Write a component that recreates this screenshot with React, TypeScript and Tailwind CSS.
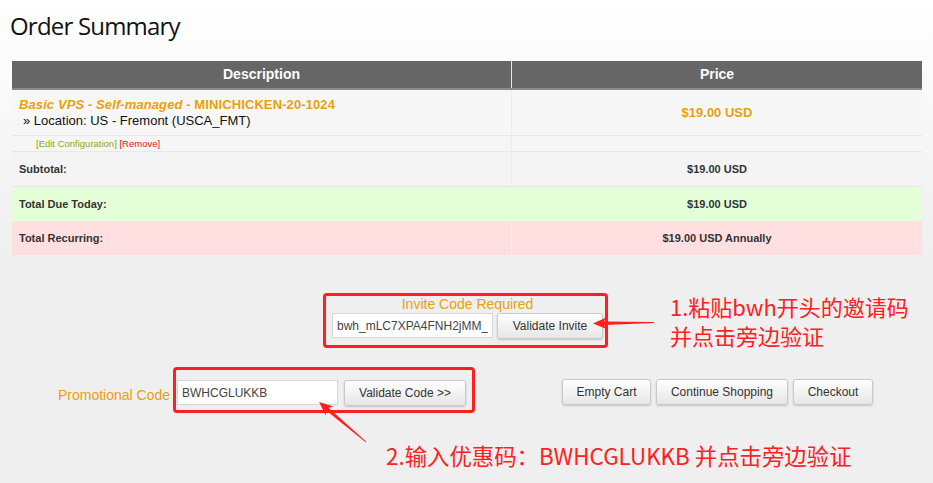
import type { ReactNode } from 'react';

const sans = { fontFamily: '"Liberation Sans", Arial, sans-serif' };
const cjk = { fontFamily: '"Noto Sans CJK SC", sans-serif' };

function Btn({ children, className = '' }: { children: ReactNode; className?: string }) {
  return (
    <button
      className={
        'h-[26px] rounded-[3px] border border-[#c9c9c9] bg-[linear-gradient(to_bottom,#ffffff,#e6e6e6)] text-[12px] text-[#333] shadow-[0_1px_2px_rgba(0,0,0,0.18)] ' +
        className
      }
    >
      {children}
    </button>
  );
}

// tapered annotation arrow, tail -> tip
function arrowPoints(tail: [number, number], tip: [number, number], head = 14, half = 6, shaft = 1.8) {
  const dx = tip[0] - tail[0];
  const dy = tip[1] - tail[1];
  const len = Math.hypot(dx, dy);
  const ux = dx / len;
  const uy = dy / len;
  const px = -uy;
  const py = ux;
  const bx = tip[0] - ux * head;
  const by = tip[1] - uy * head;
  const pts = [
    [tail[0] + px * 0.4, tail[1] + py * 0.4],
    [bx + ux * 3 + px * shaft, by + uy * 3 + py * shaft],
    [bx + px * half, by + py * half],
    tip,
    [bx - px * half, by - py * half],
    [bx + ux * 3 - px * shaft, by + uy * 3 - py * shaft],
    [tail[0] - px * 0.4, tail[1] - py * 0.4],
  ];
  return pts.map((p) => p[0].toFixed(1) + ',' + p[1].toFixed(1)).join(' ');
}

export default function App() {
  return (
    <div
      className="relative w-[933px] h-[483px] overflow-hidden bg-[linear-gradient(to_bottom,#ffffff,#efefef_260px)]"
      style={sans}
    >
      {/* Title */}
      <h1
        className="pl-[10px] pt-[9px] text-[24px] leading-[34px] text-[#111] tracking-[-0.8px]"
        style={{ fontFamily: '"Open Sans", sans-serif' }}
      >
        Order Summary
      </h1>

      {/* Cart table */}
      <div className="ml-[12px] mt-[18px] w-[910px]">
        <div className="flex h-[29px] bg-[#666666] border-b-2 border-[#8a8a8a] text-[14px] font-bold text-white">
          <div className="w-[500px] flex items-center justify-center border-r border-[#e5e5e5]">Description</div>
          <div className="flex-1 flex items-center justify-center">Price</div>
        </div>

        <div className="flex h-[46px] bg-[#f7f7f7] border-b border-[#e8e8e8]">
          <div className="w-[500px] border-r border-[#ececec] pl-[7px] pt-[7px] text-[13px] leading-[16px]">
            <div className="font-bold text-[#e9a00f] tracking-[0.1px]">
              <i>Basic VPS - Self-managed</i> - MINICHICKEN-20-1024
            </div>
            <div className="pl-[4px] text-[#111]">» Location: US - Fremont (USCA_FMT)</div>
          </div>
          <div className="flex-1 flex items-center justify-center text-[13px] font-bold text-[#e9a00f]">
            $19.00 USD
          </div>
        </div>

        <div className="flex h-[16px] bg-[#f6f6f6] border-b border-[#e8e8e8]">
          <div className="w-[500px] border-r border-[#ececec] pl-[24px] text-[9.5px] leading-[15px]">
            <span className="text-[#8fa51a]">[Edit Configuration]</span>{' '}
            <span className="text-[#e4141b]">[Remove]</span>
          </div>
          <div className="flex-1" />
        </div>

        <div className="flex h-[35px] bg-[#f4f4f4] border-b border-[#e6e6e6] text-[11px] font-bold text-[#333]">
          <div className="w-[500px] border-r border-[#ececec] pl-[7px] flex items-center">Subtotal:</div>
          <div className="flex-1 flex items-center justify-center">$19.00 USD</div>
        </div>
        <div className="flex h-[34px] bg-[#e5ffd9] text-[11px] font-bold text-[#333]">
          <div className="w-[500px] border-r border-[#f2f2f2] pl-[7px] flex items-center">Total Due Today:</div>
          <div className="flex-1 flex items-center justify-center">$19.00 USD</div>
        </div>
        <div className="flex h-[34px] bg-[#ffdfdf] text-[11px] font-bold text-[#333]">
          <div className="w-[500px] border-r border-[#f2f2f2] pl-[7px] flex items-center">Total Recurring:</div>
          <div className="flex-1 flex items-center justify-center">$19.00 USD Annually</div>
        </div>
      </div>

      {/* Invite code */}
      <div className="mt-[38px] ml-[323px] relative w-[285px] h-[55px] rounded-[4px] border-[3px] border-[#ff1f1f] pl-[6px]">
        <div className="text-center text-[14px] leading-[16px] text-[#e9a00f] pr-[2px]">Invite Code Required</div>
        <div className="mt-[1px] flex gap-[4px]">
          <input
            readOnly
            value="bwh_mLC7XPA4FNH2jMM_kR5nVq8"
            className="w-[161px] h-[25px] border border-[#d6d6d6] bg-white px-[4px] text-[12px] text-[#444] outline-none"
          />
          <Btn className="w-[106px]">Validate Invite</Btn>
        </div>
        <div className="absolute left-[344px] top-[-4px] w-[270px] text-[22px] leading-[29px] text-[#ff2020]" style={cjk}>
          <div>1.粘贴bwh开头的邀请码</div>
          <div>并点击旁边验证</div>
        </div>
      </div>

      {/* Promo + actions */}
      <div className="mt-[19px] flex items-start pl-[58px] pr-[60px]">
        <div className="w-[115px] mt-[20px] text-[14px] leading-[16px] text-[#e9a00f] whitespace-nowrap">Promotional Code</div>
        <div className="flex gap-[6px] w-[302px] h-[46px] rounded-[4px] border-[3px] border-[#ff1f1f] pl-[1px] pt-[10px]">
          <input
            readOnly
            value="BWHCGLUKKB"
            className="w-[161px] h-[25px] border border-[#d6d6d6] bg-white px-[4px] text-[12px] text-[#444] outline-none"
          />
          <Btn className="w-[122px]">Validate Code &gt;&gt;</Btn>
        </div>
        <div className="ml-auto mt-[12px] flex gap-[5px]">
          <Btn className="w-[89px]">Empty Cart</Btn>
          <Btn className="w-[132px]">Continue Shopping</Btn>
          <Btn className="w-[80px]">Checkout</Btn>
        </div>
      </div>

      <div className="mt-[28px] pl-[386px] text-[22.4px] leading-[28px] text-[#ff2020] whitespace-nowrap" style={cjk}>
        2.输入优惠码：BWHCGLUKKB 并点击旁边验证
      </div>

      {/* annotation arrows */}
      <svg className="pointer-events-none absolute inset-0" width="933" height="483">
        <polygon points={arrowPoints([654, 322.5], [593, 323.5])} fill="#ff1f1f" />
        <polygon points={arrowPoints([366, 442], [319, 402])} fill="#ff1f1f" />
      </svg>
    </div>
  );
}
